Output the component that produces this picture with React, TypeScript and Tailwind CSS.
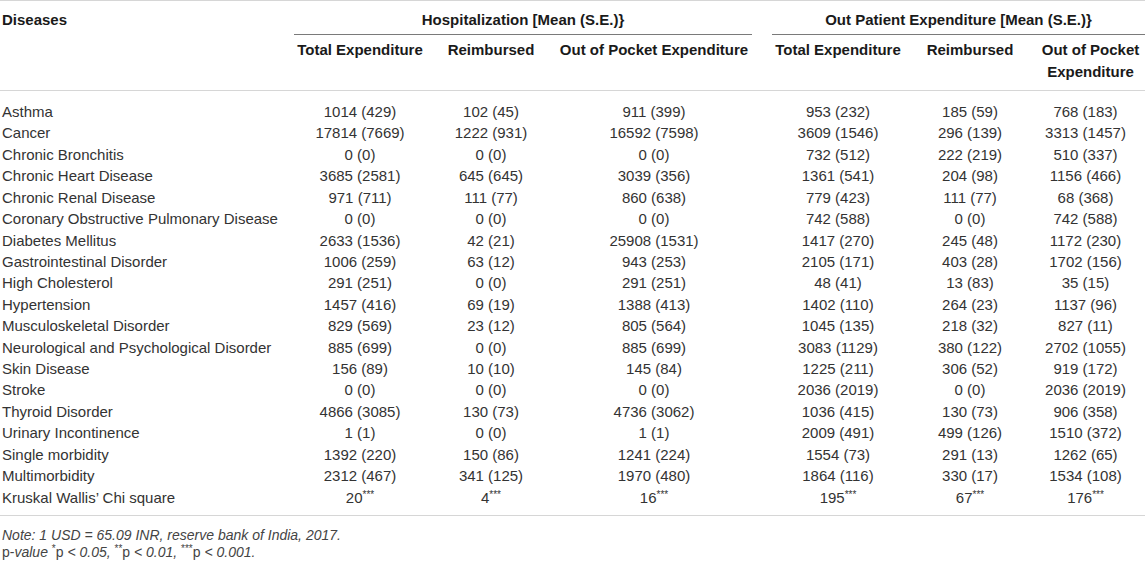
const rows: [string, string, string, string, string, string, string][] = [
  ['Asthma', '1014 (429)', '102 (45)', '911 (399)', '953 (232)', '185 (59)', '768 (183)'],
  ['Cancer', '17814 (7669)', '1222 (931)', '16592 (7598)', '3609 (1546)', '296 (139)', '3313 (1457)'],
  ['Chronic Bronchitis', '0 (0)', '0 (0)', '0 (0)', '732 (512)', '222 (219)', '510 (337)'],
  ['Chronic Heart Disease', '3685 (2581)', '645 (645)', '3039 (356)', '1361 (541)', '204 (98)', '1156 (466)'],
  ['Chronic Renal Disease', '971 (711)', '111 (77)', '860 (638)', '779 (423)', '111 (77)', '68 (368)'],
  ['Coronary Obstructive Pulmonary Disease', '0 (0)', '0 (0)', '0 (0)', '742 (588)', '0 (0)', '742 (588)'],
  ['Diabetes Mellitus', '2633 (1536)', '42 (21)', '25908 (1531)', '1417 (270)', '245 (48)', '1172 (230)'],
  ['Gastrointestinal Disorder', '1006 (259)', '63 (12)', '943 (253)', '2105 (171)', '403 (28)', '1702 (156)'],
  ['High Cholesterol', '291 (251)', '0 (0)', '291 (251)', '48 (41)', '13 (83)', '35 (15)'],
  ['Hypertension', '1457 (416)', '69 (19)', '1388 (413)', '1402 (110)', '264 (23)', '1137 (96)'],
  ['Musculoskeletal Disorder', '829 (569)', '23 (12)', '805 (564)', '1045 (135)', '218 (32)', '827 (11)'],
  ['Neurological and Psychological Disorder', '885 (699)', '0 (0)', '885 (699)', '3083 (1129)', '380 (122)', '2702 (1055)'],
  ['Skin Disease', '156 (89)', '10 (10)', '145 (84)', '1225 (211)', '306 (52)', '919 (172)'],
  ['Stroke', '0 (0)', '0 (0)', '0 (0)', '2036 (2019)', '0 (0)', '2036 (2019)'],
  ['Thyroid Disorder', '4866 (3085)', '130 (73)', '4736 (3062)', '1036 (415)', '130 (73)', '906 (358)'],
  ['Urinary Incontinence', '1 (1)', '0 (0)', '1 (1)', '2009 (491)', '499 (126)', '1510 (372)'],
  ['Single morbidity', '1392 (220)', '150 (86)', '1241 (224)', '1554 (73)', '291 (13)', '1262 (65)'],
  ['Multimorbidity', '2312 (467)', '341 (125)', '1970 (480)', '1864 (116)', '330 (17)', '1534 (108)'],
];

const chiSquare = ['20', '4', '16', '195', '67', '176'];

const Stars = ({ n }: { n: number }) => (
  <span className="relative -top-[5px] text-[10px] leading-none">{'*'.repeat(n)}</span>
);

export default function App() {
  return (
    <div className="w-[1145px] h-[561px] overflow-hidden bg-white font-['Liberation_Sans',Arial,sans-serif] text-[#333]">
      <table className="w-full table-fixed border-collapse text-[15px]">
        <colgroup>
          <col className="w-[284px]" />
          <col className="w-[152px]" />
          <col className="w-[110px]" />
          <col className="w-[216px]" />
          <col className="w-[152px]" />
          <col className="w-[112px]" />
          <col className="w-[119px]" />
        </colgroup>
        <thead className="font-bold text-[#1a1a1a]">
          <tr className="border-t border-[#d6d6d6]">
            <th rowSpan={2} className="pl-[2px] pt-[8px] text-left align-top leading-[22px]">
              Diseases
            </th>
            <th colSpan={3} className="px-[10px] pt-[8px] align-top">
              <div className="border-b border-[#7a7a7a] pb-[3px] text-center leading-[22px]">
                {'Hospitalization [Mean (S.E.)}'}
              </div>
            </th>
            <th colSpan={3} className="pl-[10px] pt-[8px] align-top">
              <div className="border-b border-[#7a7a7a] pb-[3px] text-center leading-[22px]">
                {'Out Patient Expenditure [Mean (S.E.)}'}
              </div>
            </th>
          </tr>
          <tr className="border-b border-[#d6d6d6]">
            <th className="px-[10px] pt-[4px] pb-[7px] text-center align-top leading-[22px]">Total Expenditure</th>
            <th className="px-[10px] pt-[4px] pb-[7px] text-center align-top leading-[22px]">Reimbursed</th>
            <th className="px-[10px] pt-[4px] pb-[7px] text-center align-top leading-[22px]">Out of Pocket Expenditure</th>
            <th className="px-[10px] pt-[4px] pb-[7px] text-center align-top leading-[22px]">Total Expenditure</th>
            <th className="px-[10px] pt-[4px] pb-[7px] text-center align-top leading-[22px]">Reimbursed</th>
            <th className="pl-[10px] pt-[4px] pb-[7px] text-center align-top leading-[22px]">
              Out of Pocket
              <br />
              Expenditure
            </th>
          </tr>
        </thead>
        <tbody className="leading-[21.42px]">
          {rows.map((r, i) => (
            <tr key={r[0]}>
              {r.map((c, j) => (
                <td
                  key={j}
                  className={
                    (j === 0 ? 'pl-[2px] text-left whitespace-nowrap' : 'text-center') +
                    (i === 0 ? ' pt-[10px]' : ' p-0')
                  }
                >
                  {c}
                </td>
              ))}
            </tr>
          ))}
          <tr className="border-b border-[#d6d6d6]">
            <td className="pl-[2px] pb-[7px] text-left">Kruskal Wallis’ Chi square</td>
            {chiSquare.map((v) => (
              <td key={v} className="pb-[7px] text-center">
                {v}
                <Stars n={3} />
              </td>
            ))}
          </tr>
        </tbody>
      </table>
      <div className="pl-[2px] pt-[11px] text-[14px] leading-[17px] text-[#444]">
        <p className="italic">Note: 1 USD = 65.09 INR, reserve bank of India, 2017.</p>
        <p>
          p-<span className="italic">value</span> <Stars n={1} />p<span className="italic"> &lt; 0.05, </span>
          <Stars n={2} />p<span className="italic"> &lt; 0.01, </span>
          <Stars n={3} />p<span className="italic"> &lt; 0.001.</span>
        </p>
      </div>
    </div>
  );
}
